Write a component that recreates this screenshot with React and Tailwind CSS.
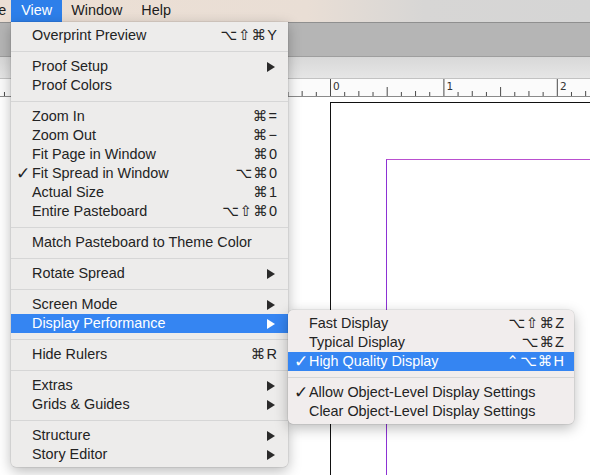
import React from "react";

const FONT = { fontFamily: '"Liberation Sans", "DejaVu Sans", Arial, sans-serif' };

function Arrow({ white }) {
  return (
    <svg width="8" height="10" viewBox="0 0 8 10" className="block">
      <polygon points="0,0 8,5 0,10" fill={white ? "#ffffff" : "#2a2a2a"} />
    </svg>
  );
}

function Item({ label, sc, sub, check, active, right = "pr-[11px]", arrowRight = "pr-[13px]", checkPad = "pl-[5px]" }) {
  return (
    <div
      className={
        "h-[19px] flex items-center " +
        (active ? "bg-[#3585f2] text-white " : "text-[#232323] ") +
        (sub ? arrowRight : right)
      }
    >
      <div className={"w-[21px] shrink-0 " + checkPad + " text-[17px] leading-none"}>
        {check ? "✓" : ""}
      </div>
      <div className="flex-1 whitespace-nowrap text-[14.4px] leading-none">{label}</div>
      {sc ? (
        <div
          className="whitespace-nowrap text-[14.5px] leading-none tracking-[1.2px] mr-[-1.2px]"
          style={FONT}
        >
          {sc}
        </div>
      ) : null}
      {sub ? <Arrow white={active} /> : null}
    </div>
  );
}

function Sep() {
  return (
    <div className="h-[12px] flex items-center">
      <div className="h-px w-full bg-[#d6d6d6]" />
    </div>
  );
}

const mainItems = [
  { label: "Overprint Preview", sc: "⌥⇧⌘Y" },
  "sep",
  { label: "Proof Setup", sub: true },
  { label: "Proof Colors" },
  "sep",
  { label: "Zoom In", sc: "⌘=" },
  { label: "Zoom Out", sc: "⌘−" },
  { label: "Fit Page in Window", sc: "⌘0" },
  { label: "Fit Spread in Window", sc: "⌥⌘0", check: true },
  { label: "Actual Size", sc: "⌘1" },
  { label: "Entire Pasteboard", sc: "⌥⇧⌘0" },
  "sep",
  { label: "Match Pasteboard to Theme Color" },
  "sep",
  { label: "Rotate Spread", sub: true },
  "sep",
  { label: "Screen Mode", sub: true },
  { label: "Display Performance", sub: true, active: true },
  "sep",
  { label: "Hide Rulers", sc: "⌘R" },
  "sep",
  { label: "Extras", sub: true },
  { label: "Grids & Guides", sub: true },
  "sep",
  { label: "Structure", sub: true },
  { label: "Story Editor", sub: true },
];

const subItems = [
  { label: "Fast Display", sc: "⌥⇧⌘Z" },
  { label: "Typical Display", sc: "⌥⌘Z" },
  { label: "High Quality Display", sc: "⌃⌥⌘H", check: true, active: true },
  "sep",
  { label: "Allow Object-Level Display Settings", check: true },
  { label: "Clear Object-Level Display Settings" },
];

function Ruler() {
  const ticks = [];
  const step = 113.4 / 8;
  for (let i = -24; i <= 18; i++) {
    const x = 330.5 + i * step;
    if (x < 0 || x > 590) continue;
    const m = ((i % 8) + 8) % 8;
    let h = 4;
    if (m === 0) h = 17;
    else if (m === 4) h = 9;
    else if (m % 2 === 0) h = 5;
    ticks.push(<line key={i} x1={x} x2={x} y1={17 - h} y2={17} stroke="#4a4a4a" strokeWidth="1" />);
  }
  return (
    <svg width="590" height="17" className="block">
      {ticks}
      <text x="333" y="11" fontSize="10.5" fill="#333" style={{ fontFamily: '"DejaVu Sans", sans-serif' }}>0</text>
      <text x="446.5" y="11" fontSize="10.5" fill="#333" style={{ fontFamily: '"DejaVu Sans", sans-serif' }}>1</text>
      <text x="560" y="11" fontSize="10.5" fill="#333" style={{ fontFamily: '"DejaVu Sans", sans-serif' }}>2</text>
    </svg>
  );
}

export default function App() {
  return (
    <div className="relative w-[590px] h-[475px] overflow-hidden flex flex-col bg-white" style={FONT}>
      {/* menu bar */}
      <div className="h-[22px] shrink-0 flex items-center text-[14.4px] text-[#1c1c1c] bg-[linear-gradient(90deg,#ecdfd4_0%,#e9ded5_52%,#d7d6d5_72%,#d5d5d5_100%)]">
        <span className="-ml-[25px] mr-[5px] whitespace-nowrap">Type</span>
        <span className="h-full flex items-center px-[10px] bg-[#2d7fea] text-white">View</span>
        <span className="pl-[9px] pr-[9px]">Window</span>
        <span className="pl-[10px]">Help</span>
      </div>
      {/* dark control band */}
      <div className="h-[35px] shrink-0 bg-[#b5b5b5] border-t border-[#8f8f8f] border-b border-b-[#9e9e9e]" />
      {/* light tab band */}
      <div className="h-[22px] shrink-0 bg-[linear-gradient(180deg,#d8d8d8,#e6e6e6)] border-b border-[#c2c2c2]" />
      {/* ruler */}
      <div className="h-[18px] shrink-0 bg-[#fbfbfb] border-b border-[#8a8a8a]">
        <Ruler />
      </div>
      {/* canvas */}
      <div className="flex-1 bg-white pl-[330px] pt-[5px]">
        <div className="h-full border-l border-t border-[#111]">
          <div className="h-full pl-[55px] pt-[56px]">
            <div className="h-full border-l border-t border-l-[#8c32d4] border-t-[#b94fcf]" />
          </div>
        </div>
      </div>

      {/* main View menu */}
      <div className="absolute left-[11px] top-[22px] w-[277px] pt-[4px] pb-[3px] bg-[#edeceb] rounded-b-[5px] shadow-[0_4px_14px_rgba(0,0,0,0.28),0_0_0_0.5px_rgba(0,0,0,0.12)]">
        {mainItems.map((it, i) => (it === "sep" ? <Sep key={i} /> : <Item key={i} {...it} />))}
      </div>

      {/* submenu */}
      <div className="absolute left-[288px] top-[310px] w-[286px] pt-[4px] pb-[3px] bg-[#f1eded] rounded-[5px] shadow-[0_4px_14px_rgba(0,0,0,0.28),0_0_0_0.5px_rgba(0,0,0,0.12)]">
        {subItems.map((it, i) =>
          it === "sep" ? <Sep key={i} /> : <Item key={i} {...it} right="pr-[10px]" checkPad="pl-[6px]" />
        )}
      </div>
    </div>
  );
}
